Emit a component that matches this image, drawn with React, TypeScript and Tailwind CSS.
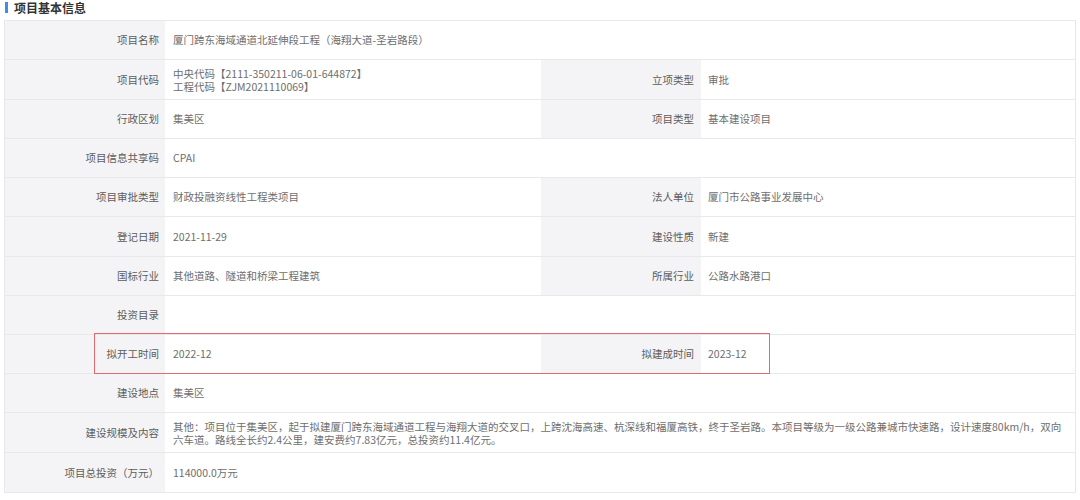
import React from 'react';

type Row = {
  label: string;
  value: React.ReactNode;
  label2?: string;
  value2?: React.ReactNode;
  h: string;
  mark?: boolean;
};

const rows: Row[] = [
  { label: '项目名称', value: '厦门跨东海域通道北延伸段工程（海翔大道-圣岩路段）', h: 'h-[39px]' },
  {
    label: '项目代码',
    value: (
      <div className="leading-[13px]">
        <div>中央代码【2111-350211-06-01-644872】</div>
        <div>工程代码【ZJM2021110069】</div>
      </div>
    ),
    label2: '立项类型',
    value2: '审批',
    h: 'h-[40px]',
  },
  { label: '行政区划', value: '集美区', label2: '项目类型', value2: '基本建设项目', h: 'h-[39px]' },
  { label: '项目信息共享码', value: 'CPAI', h: 'h-[39px]' },
  { label: '项目审批类型', value: '财政投融资线性工程类项目', label2: '法人单位', value2: '厦门市公路事业发展中心', h: 'h-[39px]' },
  { label: '登记日期', value: '2021-11-29', label2: '建设性质', value2: '新建', h: 'h-[40px]' },
  { label: '国标行业', value: '其他道路、隧道和桥梁工程建筑', label2: '所属行业', value2: '公路水路港口', h: 'h-[39px]' },
  { label: '投资目录', value: '', h: 'h-[39px]' },
  { label: '拟开工时间', value: '2022-12', label2: '拟建成时间', value2: '2023-12', h: 'h-[39px]', mark: true },
  { label: '建设地点', value: '集美区', h: 'h-[39px]' },
  {
    label: '建设规模及内容',
    value: (
      <div className="leading-[13px]">
        其他：项目位于集美区，起于拟建厦门跨东海域通道工程与海翔大道的交叉口，上跨沈海高速、杭深线和福厦高铁，终于圣岩路。本项目等级为一级公路兼城市快速路，设计速度80km/h，双向
        <br />
        六车道。路线全长约2.4公里，建安费约7.83亿元，总投资约11.4亿元。
      </div>
    ),
    h: 'h-[40px]',
  },
  { label: '项目总投资（万元）', value: '114000.0万元', h: 'h-[40px]' },
];

function InfoRow({ row }: { row: Row }) {
  return (
    <div className={`relative flex border-b border-[#e8e8e8] ${row.h}`}>
      <div className="flex w-[160px] shrink-0 items-center justify-end bg-[#f4f4f6] pr-[6px] text-[#5c5c5c]">
        {row.label}
      </div>
      {row.label2 ? (
        <>
          <div className="flex w-[376px] shrink-0 items-center pl-[8px] text-[#6e6e6e]">{row.value}</div>
          <div className="flex w-[160px] shrink-0 items-center justify-end bg-[#f4f4f6] pr-[7px] text-[#5c5c5c]">
            {row.label2}
          </div>
          <div className="flex flex-1 items-center pl-[7px] text-[#6e6e6e]">{row.value2}</div>
        </>
      ) : (
        <div className="flex flex-1 items-center pl-[8px] pr-[8px] text-[#6e6e6e]">{row.value}</div>
      )}
      {row.mark && (
        <div className="pointer-events-none absolute -top-[2px] left-[89px] h-[41px] w-[676px] border border-[#e06a70]" />
      )}
    </div>
  );
}

export default function App() {
  return (
    <div
      className="h-[500px] w-[1080px] bg-white text-[10.5px]"
      style={{ fontFamily: '"Microsoft YaHei", "Noto Sans CJK SC", sans-serif' }}
    >
      {/* Section title */}
      <div className="flex h-[20px] items-start pl-[5px] pt-[1px]">
        <span className="mt-[1px] h-[11px] w-[3px] bg-[#3d8fe6]" />
        <span className="ml-[6px] text-[12px] font-bold leading-[13px] text-[#333]">项目基本信息</span>
      </div>

      {/* Info table */}
      <div className="ml-[4px] w-[1072px] border-l border-r border-t border-[#e8e8e8]">
        {rows.map((row) => (
          <InfoRow key={row.label} row={row} />
        ))}
      </div>
    </div>
  );
}
